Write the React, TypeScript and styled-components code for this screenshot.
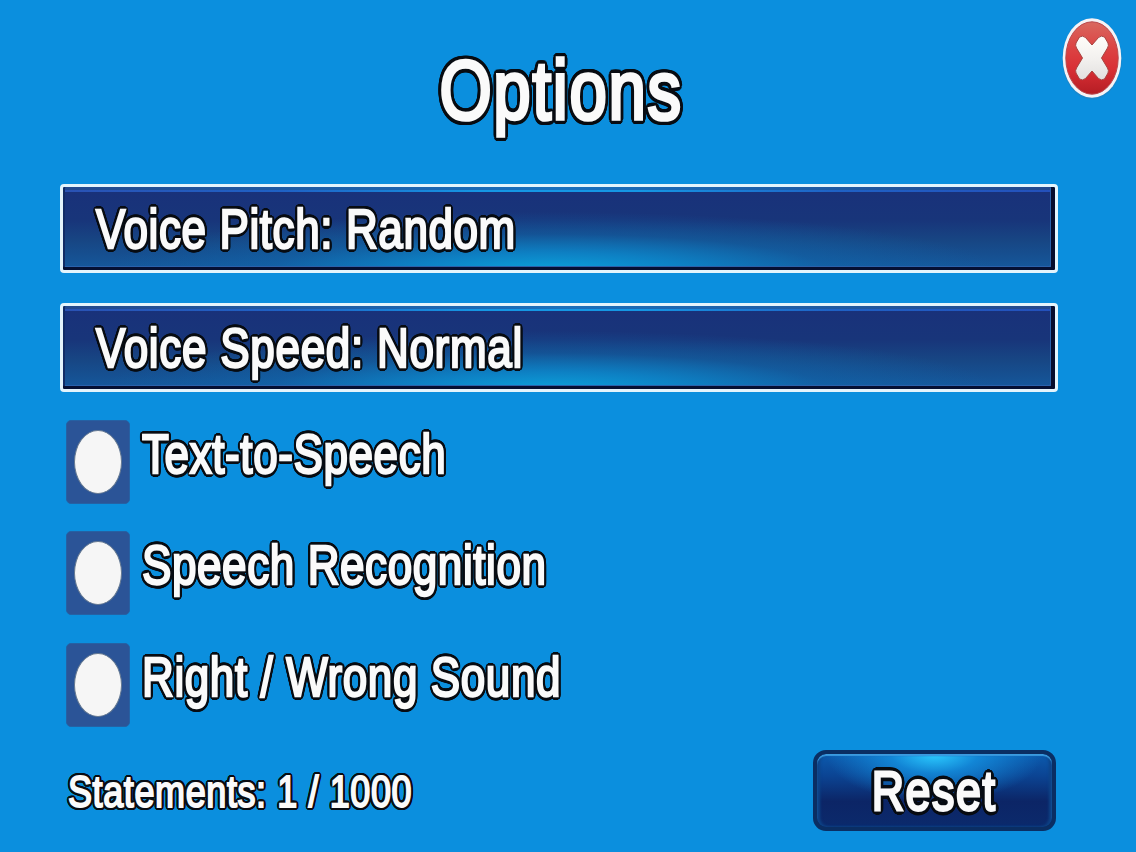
import { useState } from "react";
import styled, { createGlobalStyle } from "styled-components";

const toggles = ["Text-to-Speech", "Speech Recognition", "Right / Wrong Sound"];

// round outline made of shadows, radius in px
const outline = (r: number) =>
  [r, r / 2]
    .flatMap((radius) =>
      Array.from({ length: 24 }, (_, i) => {
        const a = (i * Math.PI) / 12;
        return `${(Math.cos(a) * radius).toFixed(2)}px ${(Math.sin(a) * radius).toFixed(2)}px 0 #080c12`;
      })
    )
    .join(", ");

function App() {
  const [enabled, setEnabled] = useState<string[]>([]);
  const toggle = (name: string) =>
    setEnabled((prev) =>
      prev.includes(name) ? prev.filter((n) => n !== name) : [...prev, name]
    );
  return (
    <Screen>
      <GlobalStyle />
      <Header>
        <Title>
          <Label $size={84} $spacing={2.1} $stroke={3.7} $outline={5.3} $center>
            Options
          </Label>
        </Title>
        <CloseButton aria-label="Close">
          <CloseIcon />
        </CloseButton>
      </Header>
      <Selects>
        <SelectBar>
          <Label $size={55} $spacing={0.75}>
            Voice Pitch: Random
          </Label>
        </SelectBar>
        <SelectBar>
          <Label $size={55} $spacing={0.9}>
            Voice Speed: Normal
          </Label>
        </SelectBar>
      </Selects>
      <Toggles>
        {toggles.map((name) => (
          <ToggleRow key={name}>
            <Box onClick={() => toggle(name)}>
              <Knob $on={enabled.includes(name)} />
            </Box>
            <Label $size={55} $spacing={0.75}>
              {name}
            </Label>
          </ToggleRow>
        ))}
      </Toggles>
      <Footer>
        <Label $size={45} $spacing={0.75} $stroke={2} $outline={3.4}>
          Statements: 1 / 1000
        </Label>
        <ResetButton>
          <Label $size={56} $spacing={2} $stroke={2.8} $outline={4.6} $center>
            Reset
          </Label>
        </ResetButton>
      </Footer>
    </Screen>
  );
}

function CloseIcon() {
  return (
    <svg width="62" height="84" viewBox="0 0 62 84">
      <defs>
        <linearGradient id="red" x1="0" y1="0" x2="0" y2="1">
          <stop offset="0" stopColor="#d9685f" />
          <stop offset="0.35" stopColor="#dc4444" />
          <stop offset="0.65" stopColor="#d92f35" />
          <stop offset="1" stopColor="#b51d24" />
        </linearGradient>
        <linearGradient id="cross" x1="0" y1="0" x2="0" y2="1">
          <stop offset="0" stopColor="#fffdfa" />
          <stop offset="0.5" stopColor="#f3f1ef" />
          <stop offset="1" stopColor="#e2e0df" />
        </linearGradient>
      </defs>
      <ellipse cx="31" cy="42" rx="29.8" ry="40.5" fill="#2a7fb8" opacity="0.5" />
      <ellipse cx="31" cy="41" rx="29.3" ry="39.8" fill="#f6f3f6" />
      <ellipse cx="31" cy="41" rx="26.2" ry="36.2" fill="url(#red)" stroke="#b9474c" />
      <path
        d="M18.500 20 Q21.500 18 24.500 20.500 L31 28 L37.500 20.500 Q40.500 18 43.500 20 L47 26 Q48 28.500 46.500 31 L40.500 41 L46.500 51 Q48 53.500 47 56 L43.500 62 Q40.500 64 37.500 61.500 L31 54 L24.500 61.500 Q21.500 64 18.500 62 L15 56 Q14 53.500 15.500 51 L21.500 41 L15.500 31 Q14 28.500 15 26 Z"
        fill="url(#cross)"
        stroke="#a8423f"
        strokeWidth="1"
      />
    </svg>
  );
}

const GlobalStyle = createGlobalStyle`
  body {
    margin: 0;
    background-color: #0b8fde;
  }
  * {
    box-sizing: border-box;
  }
  button {
    padding: 0;
    border: none;
    background: none;
    cursor: pointer;
  }
`;

const Screen = styled.main`
  display: flex;
  flex-direction: column;
  width: 1136px;
  height: 852px;
  overflow: hidden;
  background-color: #0b8fde;
  font-family: "Liberation Sans", Arial, sans-serif;
`;

const Label = styled.span<{
  $size: number;
  $spacing: number;
  $stroke?: number;
  $outline?: number;
  $center?: boolean;
}>`
  display: inline-block;
  font-size: ${(props) => props.$size}px;
  font-weight: 400;
  line-height: 1;
  letter-spacing: ${(props) => props.$spacing}px;
  white-space: nowrap;
  color: #fafafa;
  -webkit-text-stroke: ${(props) => props.$stroke ?? 2.4}px #fafafa;
  text-shadow: ${(props) => outline(props.$outline ?? 3.8)};
  transform: scaleX(0.8);
  transform-origin: ${(props) => (props.$center ? "center" : "left")};
`;

const Header = styled.header`
  display: grid;
  grid-template-columns: 1fr auto 1fr;
  height: 184px;
  padding: 17px 13px 0 0;
`;

const Title = styled.h1`
  grid-column: 2;
  margin: 31px 0 0;
`;

const CloseButton = styled.button`
  justify-self: end;
  align-self: start;
  height: 84px;
  line-height: 0;
`;

const Selects = styled.section`
  display: flex;
  flex-direction: column;
  gap: 30px;
  padding: 0 78px 0 60px;
`;

const SelectBar = styled.button`
  display: flex;
  align-items: flex-start;
  width: 998px;
  height: 89px;
  padding: 15px 0 0 33px;
  border: 3px solid #e4f4fc;
  border-radius: 4px;
  background: linear-gradient(
        90deg,
        #2a52b4 0%,
        #1f61c5 22%,
        #1597e4 42%,
        #1597e4 58%,
        #1f61c5 78%,
        #2450bb 100%
      )
      0 3px / 100% 2px no-repeat,
    linear-gradient(90deg, #24488c, #1a70bd 50%, #24488c) 0 0 / 100% 5px no-repeat,
    radial-gradient(
      ellipse 45% 70% at 49% 100%,
      #0ba0da 0%,
      rgba(11, 140, 208, 0.8) 30%,
      rgba(14, 110, 180, 0.4) 62%,
      transparent 100%
    ),
    linear-gradient(180deg, #19317a 0%, #18357a 40%, #174684 65%, #15599d 100%);
  box-shadow: inset -4px 0 0 #070c2c, inset 0 -3px 0 #051033, inset 2px 0 0 #112c66,
    inset -5px -4px 0 #2b61ab;
  text-align: left;
`;

const Toggles = styled.section`
  display: flex;
  flex-direction: column;
  gap: 27px;
  padding: 28px 0 0 66px;
`;

const ToggleRow = styled.div`
  display: flex;
  align-items: flex-start;
  gap: 12px;
  height: 84px;

  ${Label} {
    margin-top: 7px;
  }

  &:last-child {
    margin-top: 1px;
  }
`;

const Box = styled.button`
  display: flex;
  justify-content: center;
  align-items: center;
  width: 64px;
  height: 84px;
  border: 1px solid #2561a4;
  border-radius: 5px;
  background-color: #2b5497;
`;

const Knob = styled.span<{ $on: boolean }>`
  width: 48px;
  height: 64px;
  border: 1px solid #657992;
  border-radius: 50%;
  background-color: ${(props) => (props.$on ? "#59d65c" : "#f6f6f6")};
`;

const Footer = styled.footer`
  display: flex;
  justify-content: space-between;
  align-items: flex-start;
  padding: 23px 80px 0 68px;

  > ${Label} {
    margin-top: 19px;
  }
`;

const ResetButton = styled.button`
  display: flex;
  justify-content: center;
  align-items: flex-start;
  width: 243px;
  height: 81px;
  padding-top: 9px;
  border: 4px solid #0a2e63;
  border-radius: 13px;
  background: radial-gradient(
      ellipse 46% 66% at 50% 0%,
      #2cccff 0%,
      rgba(20, 150, 230, 0.75) 40%,
      transparent 100%
    ),
    linear-gradient(180deg, #0c5bae 0%, #0b4493 30%, #0c2566 65%, #0b2a6c 100%);
  box-shadow: inset 0 2px 1px #3a9be0, inset 3px 0 3px #0e4488, inset -3px 0 3px #0e4488;
  font-family: inherit;
`;

export default App;
